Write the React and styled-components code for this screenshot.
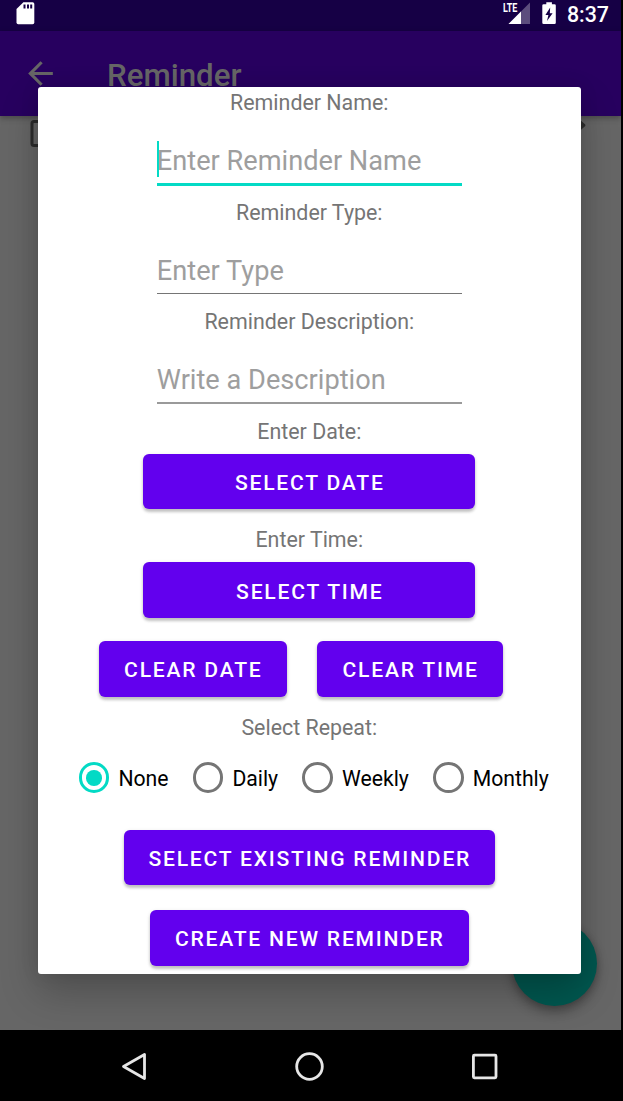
import React, { useState } from "react";
import styled, { createGlobalStyle } from "styled-components";

const Global = createGlobalStyle`
  * { box-sizing: border-box; }
  body { margin: 0; background: #000; font-family: Roboto, "Liberation Sans", sans-serif; }
  svg { display: block; flex: none; overflow: visible; }
`;

const Screen = styled.div`
  position: relative;
  width: 621px;
  height: 1101px;
  overflow: hidden;
  display: flex;
  flex-direction: column;
  background: #000;
`;

const StatusBar = styled.header`
  height: 31px;
  flex: none;
  display: flex;
  align-items: flex-start;
  justify-content: space-between;
  padding: 2px 12px 0 16px;
  background: #160045;
`;

const StatusIcons = styled.div`
  display: flex;
  align-items: flex-start;
  gap: 11px;
`;

const Clock = styled.span`
  margin-left: -1.5px;
  font-size: 21.4px;
  line-height: 25px;
  font-weight: 500;
  color: #fff;
`;

const AppBar = styled.div`
  height: 85px;
  flex: none;
  display: flex;
  align-items: center;
  padding-left: 22px;
  gap: 48px;
  background: #27005f;
  box-shadow: 0 2px 6px rgba(0, 0, 0, 0.3);
  z-index: 1;
`;

const Title = styled.h1`
  margin: 4px 0 0;
  font-size: 31.3px;
  line-height: 36px;
  font-weight: 500;
  color: #666;
`;

const Content = styled.main`
  position: relative;
  flex: 1;
  background: #666;
`;

const ListRow = styled.div`
  display: flex;
  justify-content: space-between;
  padding: 4px 35px 0 30px;
`;

const Fab = styled.div`
  position: absolute;
  right: 24px;
  bottom: 24px;
  width: 85px;
  height: 85px;
  border-radius: 50%;
  background: #01574f;
  box-shadow: 0 6px 12px rgba(0, 0, 0, 0.32), 0 0 6px rgba(0, 0, 0, 0.12);
`;

const NavBar = styled.nav`
  height: 71px;
  flex: none;
  display: flex;
  align-items: center;
  justify-content: space-between;
  padding: 2px 120px 0 116px;
  background: #000;
`;

const Clip = styled.div`
  position: absolute;
  inset: 0 0 71px;
  z-index: 2;
  overflow: hidden;
`;

const Dialog = styled.section`
  position: absolute;
  left: 38px;
  top: 87px;
  width: 542.6px;
  height: 887.2px;
  border-radius: 3px;
  background: #fff;
  box-shadow: 0 18px 38px rgba(0, 0, 0, 0.23), 0 0 20px rgba(0, 0, 0, 0.08);
  display: flex;
  flex-direction: column;
  align-items: center;
`;

const Label = styled.div`
  height: 31px;
  flex: none;
  margin-top: ${(p) => p.$top || 0}px;
  font-size: 21.4px;
  line-height: 31px;
  color: #757575;
`;

const Field = styled.div`
  position: relative;
  width: 305px;
  height: 78.6px;
  flex: none;
  padding-top: 25px;
  font-size: 27.2px;
  line-height: 36px;
  color: #9e9e9e;
  white-space: nowrap;
`;

const lines = {
  focused: { height: 3, top: 4, color: "#03dac5" },
  thin: { height: 1.4, top: 4.2, color: "#757575" },
  soft: { height: 2, top: 3.9, color: "#9a9a9a" },
};

const Underline = styled.div`
  height: ${(p) => lines[p.$kind].height}px;
  margin-top: ${(p) => lines[p.$kind].top}px;
  background: ${(p) => lines[p.$kind].color};
`;

const Caret = styled.i`
  position: absolute;
  left: 0;
  top: 23px;
  width: 2.6px;
  height: 36px;
  background: #03dac5;
`;

const Button = styled.button`
  width: ${(p) => p.$width}px;
  height: 55.5px;
  flex: none;
  margin: ${(p) => p.$top || 0}px 0 0;
  padding: 2.2px 0 0 1px;
  border: 0;
  border-radius: 6px;
  background: #6200ee;
  color: #fff;
  font: 500 21.1px/25px Roboto, "Liberation Sans", sans-serif;
  letter-spacing: 1.78px;
  white-space: nowrap;
  box-shadow: 0 3px 3px rgba(0, 0, 0, 0.2), 0 1px 4px rgba(0, 0, 0, 0.1);
`;

const ButtonPair = styled.div`
  width: 404.5px;
  margin: 23.2px 17px 0 0;
  display: flex;
  justify-content: space-between;
`;

const RadioGroup = styled.div`
  width: 470px;
  height: 31px;
  margin: 19px 0 0 9px;
  display: flex;
  justify-content: space-between;
`;

const RadioItem = styled.div`
  display: flex;
  align-items: center;
  gap: 9px;
  font-size: 21.2px;
  line-height: 31px;
  color: #000;
`;

const RadioText = styled.span`
  padding-top: 2px;
`;

const RadioDot = styled.span`
  width: 30.6px;
  height: 30.6px;
  display: grid;
  place-items: center;
  border: 3px solid ${(p) => (p.$checked ? "#03dac5" : "#757575")};
  border-radius: 50%;
  &::after {
    content: "";
    width: 15.6px;
    height: 15.6px;
    border-radius: 50%;
    background: ${(p) => (p.$checked ? "#03dac5" : "transparent")};
  }
`;

const SdCard = () => (
  <svg width="19" height="23" viewBox="0 0 19 23">
    <path d="M7.4.3H16.6Q18.3.3 18.3 2V20.5Q18.3 22.2 16.6 22.2H2.2Q.5 22.2.5 20.5V7Z" fill="#fff" />
    <path d="M7.5 2.5h2v4h-2zM11 2.5h2v4h-2zM14.2 2.5h2v4h-2z" fill="#160045" />
  </svg>
);

const Signal = () => (
  <svg width="28" height="23" viewBox="0 0 28 23">
    <path d="M27 .5V22H5.5Z" fill="#fff" opacity=".3" />
    <path d="M18 9.5V22H5.5Z" fill="#fff" />
    <path d="M0 0H15.5V10.7H0Z" fill="#160045" />
    <text x="0" y="10" fontSize="13" fontWeight="700" fill="#fff" textLength="14.4" lengthAdjust="spacingAndGlyphs">LTE</text>
  </svg>
);

const Battery = () => (
  <svg width="15" height="23" viewBox="0 0 15 23">
    <path d="M4.3.2h5.6v2h2.6q1.3 0 1.3 1.3v17.2q0 1.3-1.3 1.3H1.6Q.3 22 .3 20.7V3.5q0-1.3 1.3-1.3h2.7Z" fill="#fff" />
    <path d="M8.2 5.5 3.4 13H6.4L5 19L10.6 11.2H7.8Z" fill="#160045" />
  </svg>
);

const BackArrow = () => (
  <svg width="37" height="37" viewBox="0 0 24 24">
    <path d="M20 11H7.83l5.59-5.59L12 4l-8 8 8 8 1.41-1.41L7.83 13H20v-2z" fill="#666" />
  </svg>
);

const Checkbox = () => (
  <svg width="28" height="28" viewBox="0 0 28 28">
    <rect x="2" y="1.5" width="24" height="24" rx="2" fill="none" stroke="#2d2d2d" strokeWidth="3" />
  </svg>
);

const Pencil = () => (
  <svg width="28" height="28" viewBox="0 0 28 28">
    <path d="M0 21.5V27h5.5L21 11.5 15.5 6ZM17 4.5 21 .7q1-.9 2 0l4 3.5q1 1 0 2L22.5 10.2Z" fill="#2d2d2d" />
  </svg>
);

const repeats = ["None", "Daily", "Weekly", "Monthly"];

export default function App() {
  const [repeat, setRepeat] = useState("None");
  return (
    <>
      <Global />
      <Screen>
        <StatusBar>
          <SdCard />
          <StatusIcons>
            <Signal />
            <Battery />
            <Clock>8:37</Clock>
          </StatusIcons>
        </StatusBar>
        <AppBar>
          <BackArrow />
          <Title>Reminder</Title>
        </AppBar>
        <Content>
          <ListRow>
            <Checkbox />
            <Pencil />
          </ListRow>
          <Fab />
        </Content>
        <NavBar>
          <svg width="32" height="32" viewBox="0 0 32 32">
            <path d="M28.5 3.5V27.5L7.5 15.5Z" fill="none" stroke="#e6e6e6" strokeWidth="2.8" strokeLinejoin="round" />
          </svg>
          <svg width="32" height="32" viewBox="0 0 32 32">
            <circle cx="16.5" cy="15.5" r="12.8" fill="none" stroke="#e6e6e6" strokeWidth="2.8" />
          </svg>
          <svg width="32" height="32" viewBox="0 0 32 32">
            <rect x="4.4" y="4.2" width="22.6" height="22.6" rx="1" fill="none" stroke="#e6e6e6" strokeWidth="2.8" />
          </svg>
        </NavBar>
        <Clip>
          <Dialog>
            <Label>Reminder Name:</Label>
            <Field>
              <Caret />
              Enter Reminder Name
              <Underline $kind="focused" />
            </Field>
            <Label>Reminder Type:</Label>
            <Field>
              Enter Type
              <Underline $kind="thin" />
            </Field>
            <Label>Reminder Description:</Label>
            <Field>
              Write a Description
              <Underline $kind="soft" />
            </Field>
            <Label>Enter Date:</Label>
            <Button $width={332} $top={7.2}>SELECT DATE</Button>
            <Label $top={14.7}>Enter Time:</Label>
            <Button $width={332} $top={7.2}>SELECT TIME</Button>
            <ButtonPair>
              <Button $width={188.5}>CLEAR DATE</Button>
              <Button $width={186}>CLEAR TIME</Button>
            </ButtonPair>
            <Label $top={15.7}>Select Repeat:</Label>
            <RadioGroup>
              {repeats.map((name) => (
                <RadioItem key={name} onClick={() => setRepeat(name)}>
                  <RadioDot $checked={repeat === name} />
                  <RadioText>{name}</RadioText>
                </RadioItem>
              ))}
            </RadioGroup>
            <Button $width={371} $top={36.7}>SELECT EXISTING REMINDER</Button>
            <Button $width={319.5} $top={24.6}>CREATE NEW REMINDER</Button>
          </Dialog>
        </Clip>
      </Screen>
    </>
  );
}
